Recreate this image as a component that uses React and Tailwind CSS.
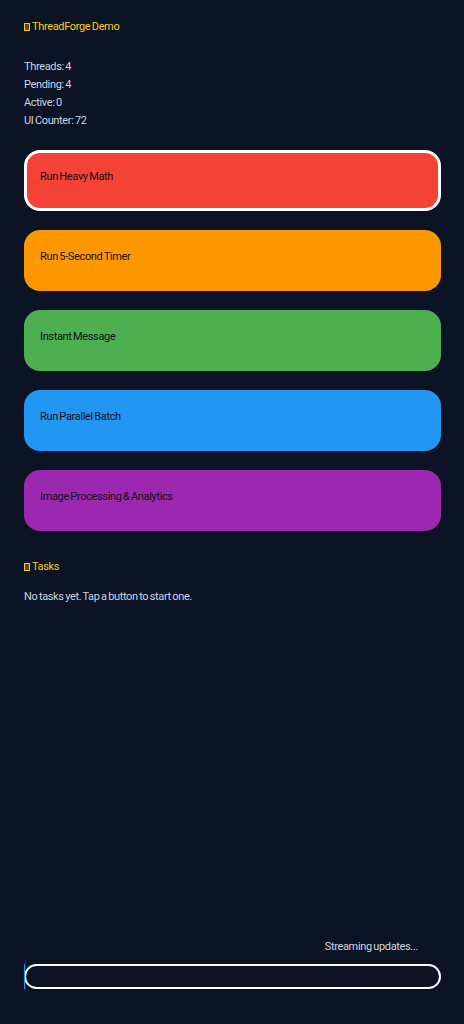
import React from 'react';

const buttons = [
  { label: 'Run Heavy Math', cls: 'bg-[#f44336] border-[3px] border-white pt-[17px] px-[13px]' },
  { label: 'Run 5-Second Timer', cls: 'bg-[#ff9800] pt-[20px] px-4' },
  { label: 'Instant Message', cls: 'bg-[#4caf50] pt-[20px] px-4' },
  { label: 'Run Parallel Batch', cls: 'bg-[#2196f3] pt-[20px] px-4' },
  { label: 'Image Processing & Analytics', cls: 'bg-[#9c27b0] pt-[20px] px-4' },
];

const Tofu = () => (
  <span className="inline-block w-[6px] h-[8px] border border-[#facc15] bg-[#facc15]/30 mr-[2px] align-[-1px]"></span>
);

export default function App() {
  return (
    <div
      className="min-h-screen bg-[#0c1324] flex flex-col px-6 text-[11px] leading-[18px] text-[#cbd5e1] tracking-[-0.35px] [word-spacing:-0.9px]"
      style={{ fontFamily: 'Roboto, "Liberation Sans", sans-serif' }}
    >
      <div className="pt-[18px] text-[#facc15]">
        <Tofu />ThreadForge Demo
      </div>

      <div className="mt-[22px] flex flex-col">
        <span>Threads: 4</span>
        <span>Pending: 4</span>
        <span>Active: 0</span>
        <span>UI Counter: 72</span>
      </div>

      <div className="mt-[20px] flex flex-col gap-[19px] w-[417px]">
        {buttons.map((b) => (
          <div key={b.label} className={`h-[61px] rounded-2xl text-[#111] leading-[14px] ${b.cls}`}>
            {b.label}
          </div>
        ))}
      </div>

      <div className="mt-[27px] text-[#facc15]">
        <Tofu />Tasks
      </div>
      <div className="mt-[12px]">No tasks yet. Tap a button to start one.</div>

      <div className="flex-1"></div>

      <div className="w-[417px] text-right pr-[23px]">Streaming updates...</div>
      <div className="mt-[8px] mb-[35px] relative w-[417px] h-[25px] rounded-full border-2 border-white">
        <span className="absolute left-[-2px] top-[-2px] w-px h-[25px] bg-[#2196f3]"></span>
      </div>
    </div>
  );
}
